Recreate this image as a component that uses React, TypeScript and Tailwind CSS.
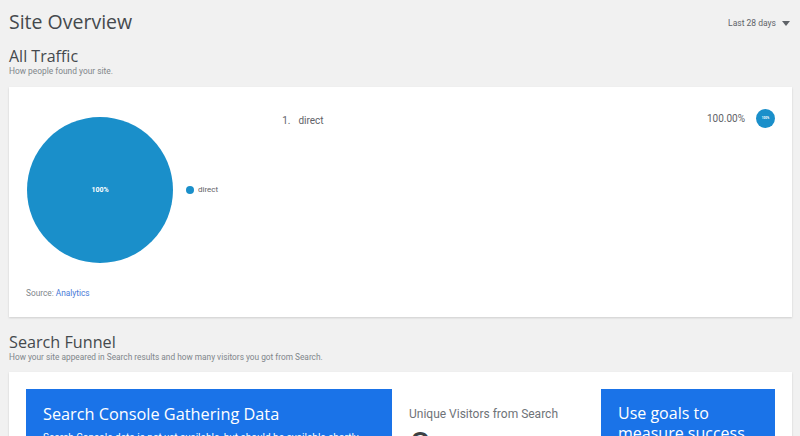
import React from "react";

export default function App() {
  return (
    <div
      className="w-[800px] h-[436px] overflow-hidden bg-[#f1f1f1] pl-[9px] pr-[8px]"
      style={{ fontFamily: "Roboto, 'Liberation Sans', sans-serif" }}
    >
      <div className="flex items-start justify-between pt-[9px]">
        <h1 className="text-[19.5px] leading-[26px] text-[#45494d]" style={{ fontFamily: "'Open Sans', Roboto, sans-serif" }}>
          Site Overview
        </h1>
        <div className="flex items-center gap-[6px] pt-[8px] pr-[2px] text-[8.5px] text-[#5f6368]">
          <span>Last 28 days</span>
          <svg width="8" height="5" viewBox="0 0 8 5"><path d="M0 0h8L4 5z" fill="#5f6368" /></svg>
        </div>
      </div>

      <h2 className="mt-[11px] text-[16px] leading-[20px] text-[#45494d]" style={{ fontFamily: "'Open Sans', Roboto, sans-serif" }}>
        All Traffic
      </h2>
      <p className="text-[8.4px] leading-[10px] text-[#80868b]">How people found your site.</p>

      <div className="mt-[11px] h-[230px] bg-white shadow-[0_1px_2px_rgba(0,0,0,0.15)] flex flex-col">
        <div className="flex flex-1">
          <div className="flex items-center pl-[18px] pt-[30px] self-start">
            <div className="w-[146px] h-[146px] rounded-full bg-[#1a8fca] flex items-center justify-center text-white text-[7px] font-bold">
              100%
            </div>
            <div className="flex items-center ml-[13px] gap-[4px] text-[8px] text-[#5f6368]">
              <span className="w-[8px] h-[8px] rounded-full bg-[#1a8fca]" />
              direct
            </div>
          </div>
          <div className="flex-1 flex items-start pt-[26px] pl-[64px] pr-[17px]">
            <div className="flex text-[10px] text-[#5f6368] gap-[8px]">
              <span>1.</span>
              <span>direct</span>
            </div>
            <div className="ml-auto flex items-center gap-[11px] -mt-[4px]">
              <span className="text-[10px] text-[#5f6368]">100.00%</span>
              <span className="w-[19px] h-[19px] rounded-full bg-[#1a8fca] flex items-center justify-center text-white text-[3px] font-bold">100%</span>
            </div>
          </div>
        </div>
        <p className="pl-[17px] pb-[18px] text-[8.3px] text-[#80868b]">
          Source: <span className="text-[#4a7bd8]">Analytics</span>
        </p>
      </div>

      <h2 className="mt-[15px] text-[16.2px] leading-[20px] text-[#45494d]" style={{ fontFamily: "'Open Sans', Roboto, sans-serif" }}>
        Search Funnel
      </h2>
      <p className="text-[8.3px] leading-[10px] text-[#80868b]">
        How your site appeared in Search results and how many visitors you got from Search.
      </p>

      <div className="mt-[10px] h-[200px] bg-white shadow-[0_1px_2px_rgba(0,0,0,0.15)] flex px-[17px] pt-[17px] gap-[17px]">
        <div className="w-[366px] h-[150px] bg-[#1a73e8] px-[17px] pt-[14px] text-white">
          <div className="text-[16.3px] leading-[22px]" style={{ fontFamily: "'Open Sans', Roboto, sans-serif" }}>
            Search Console Gathering Data
          </div>
          <div className="text-[10px] mt-[5px]">
            Search Console data is not yet available, but should be available shortly.
          </div>
        </div>
        <div className="w-[175px] pt-[16px]">
          <div className="text-[12px] text-[#6f7378]">Unique Visitors from Search</div>
          <div className="text-[40px] leading-[40px] text-[#3c4043] mt-[5px]">0</div>
        </div>
        <div className="w-[174px] h-[150px] bg-[#1a73e8] px-[17px] pt-[14px] text-white">
          <div className="text-[16px] leading-[20px]" style={{ fontFamily: "'Open Sans', Roboto, sans-serif" }}>
            Use goals to measure success
          </div>
        </div>
      </div>
    </div>
  );
}
